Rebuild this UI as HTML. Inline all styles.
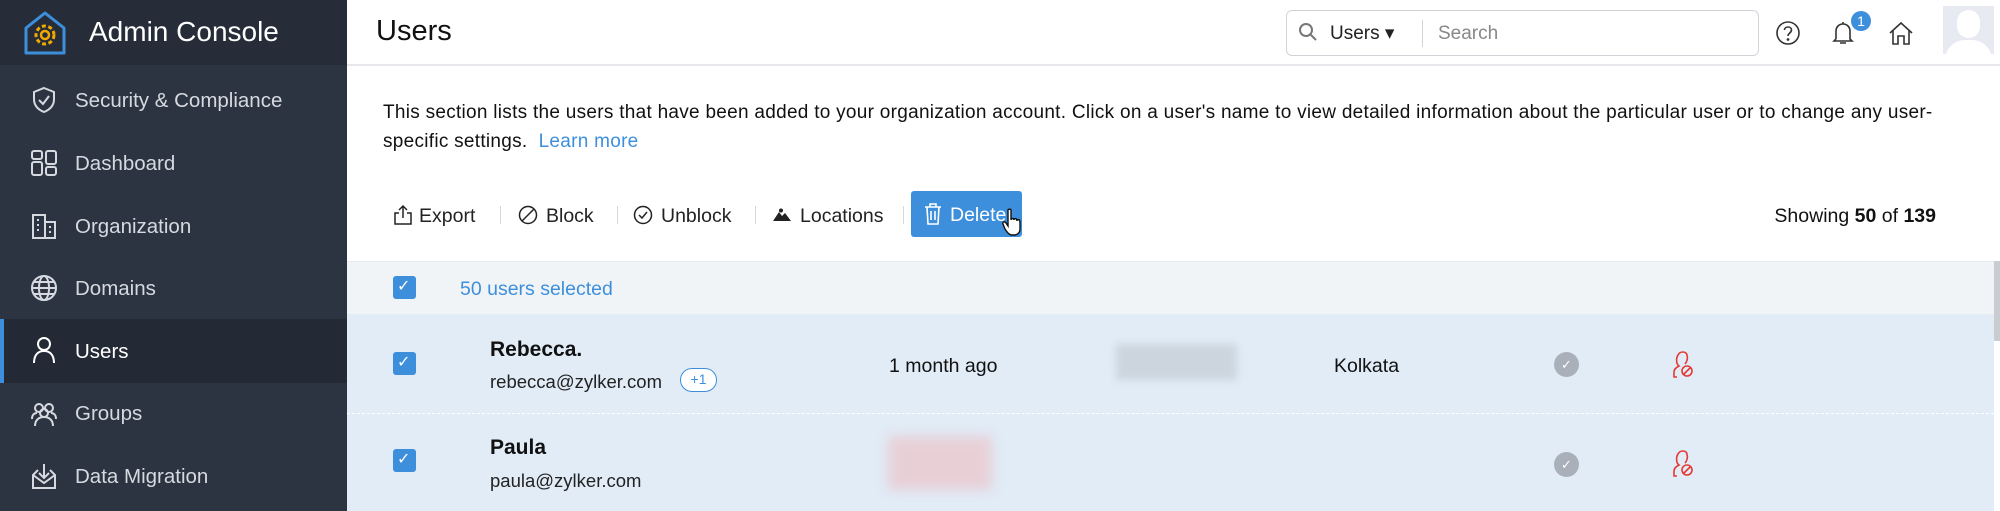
<!DOCTYPE html>
<html><head><meta charset="utf-8"><style>
*{margin:0;padding:0;box-sizing:border-box}
body{width:2000px;height:511px;overflow:hidden;font-family:"Liberation Sans",sans-serif;background:#fff;position:relative;color:#111}
.a{position:absolute;white-space:nowrap}
.side{position:absolute;left:0;top:0;width:347px;height:511px;background:#2c3442}
.logo{position:absolute;left:0;top:0;width:347px;height:65px;background:#262d38}
.mi{position:absolute;left:0;width:347px;height:62px;color:#d6dae0;font-size:20.5px;line-height:64px;padding-left:75px}
.mi svg{position:absolute;left:30px;top:17px}
.act{background:#232a35;border-left:4px solid #3d8fdc;color:#fff}
.tb{font-size:19.5px;color:#222;top:205px}
.sep{position:absolute;top:206px;width:1px;height:18px;background:#d8d8d8}
.cb{position:absolute;width:23px;height:23px;background:#3d8fdc;border-radius:3px}
</style></head><body>
<div class="side">
 <div class="logo">
  <svg class="a" style="left:22px;top:10px" width="46" height="46" viewBox="0 0 46 46"><path d="M4 18 L23 3 L42 18 V43 H4 Z" fill="none" stroke="#3d8fdc" stroke-width="3" stroke-linejoin="round"/><circle cx="23" cy="25" r="9" fill="none" stroke="#f2a900" stroke-width="3" stroke-dasharray="4 2.5"/><circle cx="23" cy="25" r="4" fill="none" stroke="#f2a900" stroke-width="2.5"/></svg>
  <div class="a" style="left:89px;top:16px;font-size:28px;color:#fff">Admin Console</div>
 </div>
 <div class="mi" style="top:69px"><svg width="28" height="28" viewBox="0 0 28 28" fill="none" stroke="#d6dae0" stroke-width="2"><path d="M14 2 L24 6 V13 C24 20 19 24 14 26 C9 24 4 20 4 13 V6 Z"/><path d="M9 14 L13 18 L19 10"/></svg>Security &amp; Compliance</div>
 <div class="mi" style="top:132px"><svg width="28" height="28" viewBox="0 0 28 28" fill="none" stroke="#d6dae0" stroke-width="2"><rect x="2" y="2" width="10" height="8" rx="2"/><rect x="16" y="2" width="10" height="13" rx="2"/><rect x="2" y="13" width="10" height="13" rx="2"/><rect x="16" y="18" width="10" height="8" rx="2"/></svg>Dashboard</div>
 <div class="mi" style="top:195px"><svg width="28" height="28" viewBox="0 0 28 28" fill="none" stroke="#d6dae0" stroke-width="2"><path d="M3 26 V3 H15 V26 M15 10 H25 V26 H2"/><path d="M7 8h2M11 8h0M7 13h2M7 18h2M19 15h2M19 20h2"/></svg>Organization</div>
 <div class="mi" style="top:257px"><svg width="28" height="28" viewBox="0 0 28 28" fill="none" stroke="#d6dae0" stroke-width="2"><circle cx="14" cy="14" r="12"/><ellipse cx="14" cy="14" rx="5" ry="12"/><path d="M2 14h24M4 8h20M4 20h20"/></svg>Domains</div>
 <div class="mi act" style="top:319px;height:64px;line-height:66px;padding-left:71px"><svg style="left:26px" width="28" height="28" viewBox="0 0 28 28" fill="none" stroke="#fff" stroke-width="2"><circle cx="14" cy="8" r="6"/><path d="M4 27 C4 19 8 15 14 15 C20 15 24 19 24 27"/></svg>Users</div>
 <div class="mi" style="top:382px"><svg width="28" height="28" viewBox="0 0 28 28" fill="none" stroke="#d6dae0" stroke-width="2"><circle cx="9" cy="9" r="4"/><circle cx="19" cy="9" r="4"/><circle cx="14" cy="14" r="4"/><path d="M5 27 C5 21 9 18 14 18 C19 18 23 21 23 27M2 20 C2 16 4 14 7 14M26 20 C26 16 24 14 21 14"/></svg>Groups</div>
 <div class="mi" style="top:445px"><svg width="28" height="28" viewBox="0 0 28 28" fill="none" stroke="#d6dae0" stroke-width="2"><path d="M14 2 V16 M9 11 L14 16 L19 11"/><path d="M8 8 L3 13 V26 H25 V13 L20 8"/><path d="M3 13 L14 21 L25 13"/></svg>Data Migration</div>
</div>

<div class="a" style="left:347px;top:64px;width:1653px;height:2px;background:#e6e8eb"></div>
<div class="a" style="left:376px;top:15px;font-size:29px;color:#111">Users</div>
<div class="a" style="left:1286px;top:10px;width:473px;height:46px;border:1px solid #d0d4d9;border-radius:6px"></div>
<svg class="a" style="left:1298px;top:22px" width="20" height="20" viewBox="0 0 20 20" fill="none" stroke="#777" stroke-width="2"><circle cx="8" cy="8" r="6"/><path d="M12.5 12.5 L18 18"/></svg>
<div class="a" style="left:1330px;top:22px;font-size:19px;color:#222">Users ▾</div>
<div class="a" style="left:1422px;top:20px;width:1px;height:27px;background:#d0d4d9"></div>
<div class="a" style="left:1438px;top:23px;font-size:19px;color:#888">Search</div>
<svg class="a" style="left:1775px;top:20px" width="26" height="26" viewBox="0 0 26 26" fill="none" stroke="#333" stroke-width="1.6"><circle cx="13" cy="13" r="11"/><path d="M9.5 10 C9.5 6 16.5 6 16.5 10 C16.5 13 13 13 13 16"/><circle cx="13" cy="19.5" r="0.6" fill="#333"/></svg>
<svg class="a" style="left:1831px;top:20px" width="24" height="26" viewBox="0 0 24 26" fill="none" stroke="#333" stroke-width="1.6"><path d="M12 2 V4 M5 19 V11 C5 7 8 4 12 4 C16 4 19 7 19 11 V19 L21 21 H3 L5 19 M9 23 H15"/></svg>
<div class="a" style="left:1851px;top:11px;width:20px;height:20px;border-radius:10px;background:#3d8fdc;color:#fff;font-size:14px;line-height:20px;text-align:center">1</div>
<svg class="a" style="left:1888px;top:20px" width="26" height="26" viewBox="0 0 26 26" fill="none" stroke="#333" stroke-width="1.6"><path d="M2 13 L13 3 L24 13 M5 10 V24 H10 V16 H16 V24 H21 V10"/></svg>
<div class="a" style="left:1943px;top:6px;width:51px;height:48px;background:#e7eaf0;overflow:hidden"><div class="a" style="left:14px;top:4px;width:23px;height:28px;border-radius:12px;background:#fff"></div><div class="a" style="left:2px;top:34px;width:47px;height:30px;border-radius:20px 20px 0 0;background:#fff"></div></div>

<div class="a" style="left:383px;top:98px;font-size:19px;line-height:29px;color:#111;letter-spacing:0.28px">This section lists the users that have been added to your organization account. Click on a user's name to view detailed information about the particular user or to change any user-<br>specific settings.&nbsp; <span style="color:#3d8fdc">Learn more</span></div>

<svg class="a" style="left:392px;top:204px" width="22" height="22" viewBox="0 0 22 22" fill="none" stroke="#222" stroke-width="1.5"><path d="M11 2 V14 M7 6 L11 2 L15 6 M7 9 H3 V20 H19 V9 H15"/></svg>
<div class="a tb" style="left:419px">Export</div>
<div class="sep" style="left:500px"></div>
<svg class="a" style="left:518px;top:205px" width="20" height="20" viewBox="0 0 20 20" fill="none" stroke="#222" stroke-width="1.5"><circle cx="10" cy="10" r="8.5"/><path d="M4 16 L16 4"/></svg>
<div class="a tb" style="left:546px">Block</div>
<div class="sep" style="left:617px"></div>
<svg class="a" style="left:633px;top:205px" width="20" height="20" viewBox="0 0 20 20" fill="none" stroke="#222" stroke-width="1.5"><circle cx="10" cy="10" r="8.5"/><path d="M6 10 L9 13 L14 7"/></svg>
<div class="a tb" style="left:661px">Unblock</div>
<div class="sep" style="left:755px"></div>
<svg class="a" style="left:772px;top:208px" width="20" height="14" viewBox="0 0 20 14"><path d="M1 13 L7 4 L10 8 L13 5 L19 13 Z" fill="#222"/><circle cx="9" cy="2.5" r="2" fill="#222"/></svg>
<div class="a tb" style="left:800px">Locations</div>
<div class="sep" style="left:903px"></div>
<div class="a" style="left:911px;top:191px;width:111px;height:46px;background:#3d8fdc;border-radius:3px"></div>
<svg class="a" style="left:924px;top:203px" width="18" height="22" viewBox="0 0 18 22" fill="none" stroke="#fff" stroke-width="1.6"><path d="M1 4 H17 M6 4 V1 H12 V4 M3 4 L4 21 H14 L15 4 M7 8 V17 M11 8 V17"/></svg>
<div class="a" style="left:950px;top:204px;font-size:19.5px;color:#fff">Delete</div>
<svg class="a" style="left:1002px;top:208px" width="22" height="28" viewBox="0 0 22 28"><path d="M6 2 C6 1 9 1 9 2 V12 C9 10 12 10 12 12 C12 10 15 10 15 13 C15 11 18 11 18 14 V21 C18 25 15 27 12 27 H10 C7 27 5 24 3 21 L1 16 C0 14 3 13 4 15 L6 18 Z" fill="#fff" stroke="#111" stroke-width="1.4"/></svg>
<div class="a" style="right:64px;top:205px;font-size:19.5px;color:#111">Showing <b>50</b> of <b>139</b></div>

<div class="a" style="left:347px;top:261px;width:1647px;height:53px;background:#f1f4f7;border-top:1px solid #e8eaed"></div>
<div class="cb" style="left:393px;top:276px"></div><div class="a" style="left:397px;top:276px;color:#fff;font-size:16px">✓</div>
<div class="a" style="left:460px;top:278px;font-size:19.5px;color:#3d8fdc">50 users selected</div>

<div class="a" style="left:347px;top:314px;width:1647px;height:197px;background:#e1ecf7"></div>
<div class="a" style="left:347px;top:413px;width:1647px;height:0;border-top:1px dashed #fff"></div>
<div class="a" style="left:1994px;top:261px;width:6px;height:80px;background:#c9cdd2"></div>

<div class="cb" style="left:393px;top:352px"></div><div class="a" style="left:397px;top:352px;color:#fff;font-size:16px">✓</div>
<div class="a" style="left:490px;top:338px;font-size:21px;font-weight:bold">Rebecca.</div>
<div class="a" style="left:490px;top:371px;font-size:18.5px;color:#222">rebecca@zylker.com</div>
<div class="a" style="left:680px;top:368px;width:37px;height:24px;border:1.5px solid #3d8fdc;border-radius:12px;background:#fff;color:#3d8fdc;font-size:14px;line-height:21px;text-align:center">+1</div>
<div class="a" style="left:889px;top:355px;font-size:19.5px">1 month ago</div>
<div class="a" style="left:1116px;top:344px;width:121px;height:36px;background:#ccd5de;filter:blur(4px)"></div>
<div class="a" style="left:1334px;top:355px;font-size:19.5px">Kolkata</div>
<div class="a" style="left:1554px;top:352px;width:25px;height:25px;border-radius:13px;background:#a9b0b9;color:#fff;font-size:13px;line-height:25px;text-align:center">✓</div>
<svg class="a" style="left:1672px;top:350px" width="22" height="28" viewBox="0 0 22 28" fill="none" stroke="#e53935" stroke-width="1.6"><path d="M5 27 H2 V22 C2 19 5 17 7 16 C4 14 4 8 6 5 C8 1 14 1 15 5 C16 8 15 12 13 14"/><circle cx="15" cy="21" r="5"/><path d="M12 24 L18 18"/></svg>

<div class="cb" style="left:393px;top:449px"></div><div class="a" style="left:397px;top:449px;color:#fff;font-size:16px">✓</div>
<div class="a" style="left:490px;top:436px;font-size:21px;font-weight:bold">Paula</div>
<div class="a" style="left:490px;top:470px;font-size:18.5px;color:#222">paula@zylker.com</div>
<div class="a" style="left:888px;top:436px;width:104px;height:54px;background:#e8cfd6;filter:blur(6px)"></div>
<div class="a" style="left:1554px;top:452px;width:25px;height:25px;border-radius:13px;background:#a9b0b9;color:#fff;font-size:13px;line-height:25px;text-align:center">✓</div>
<svg class="a" style="left:1672px;top:449px" width="22" height="28" viewBox="0 0 22 28" fill="none" stroke="#e53935" stroke-width="1.6"><path d="M5 27 H2 V22 C2 19 5 17 7 16 C4 14 4 8 6 5 C8 1 14 1 15 5 C16 8 15 12 13 14"/><circle cx="15" cy="21" r="5"/><path d="M12 24 L18 18"/></svg>
</body></html>
